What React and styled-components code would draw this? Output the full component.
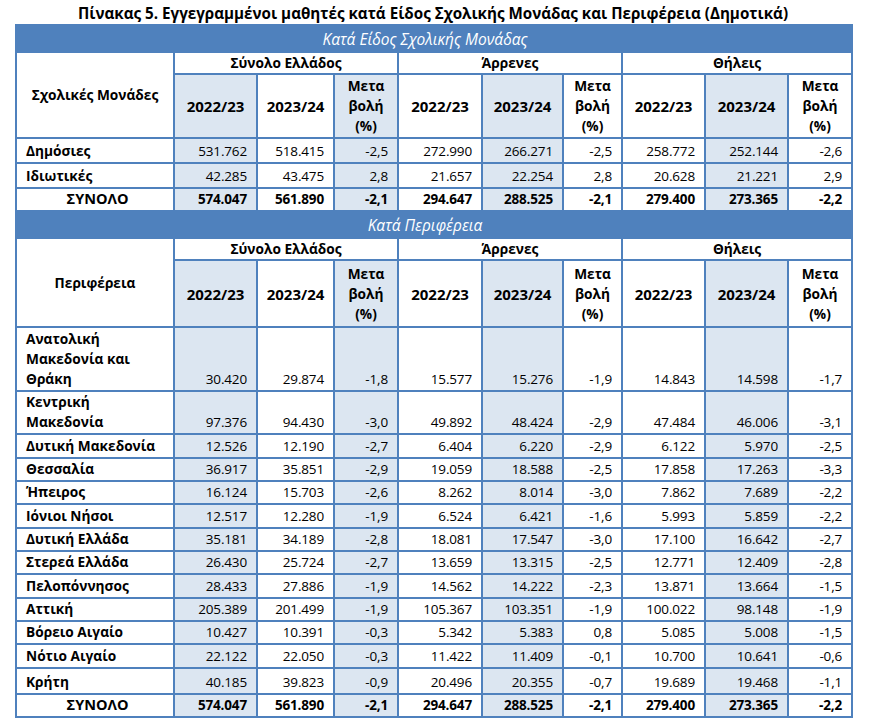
import React from "react";
import styled, { createGlobalStyle } from "styled-components";

const GlobalStyle = createGlobalStyle`
  html, body {
    margin: 0;
    padding: 0;
    background: #fff;
  }
  body {
    font-family: "Open Sans", "Noto Sans", "DejaVu Sans", sans-serif;
    color: #000;
  }
`;

const BLUE = "#4F81BD";
const SHADE = "#DCE6F1";

const widths = [158, 83, 77, 64, 84, 81, 59, 83, 83, 64];
const shaded = [false, true, false, true, false, true, false, false, true, false];

const types = [
  ["Δημόσιες", "531.762", "518.415", "-2,5", "272.990", "266.271", "-2,5", "258.772", "252.144", "-2,6"],
  ["Ιδιωτικές", "42.285", "43.475", "2,8", "21.657", "22.254", "2,8", "20.628", "21.221", "2,9"],
];
const typesTotal = ["ΣΥΝΟΛΟ", "574.047", "561.890", "-2,1", "294.647", "288.525", "-2,1", "279.400", "273.365", "-2,2"];

const regions = [
  [["Ανατολική", "Μακεδονία και", "Θράκη"], 64, "30.420", "29.874", "-1,8", "15.577", "15.276", "-1,9", "14.843", "14.598", "-1,7"],
  [["Κεντρική", "Μακεδονία"], 43, "97.376", "94.430", "-3,0", "49.892", "48.424", "-2,9", "47.484", "46.006", "-3,1"],
  [["Δυτική Μακεδονία"], 24, "12.526", "12.190", "-2,7", "6.404", "6.220", "-2,9", "6.122", "5.970", "-2,5"],
  [["Θεσσαλία"], 23, "36.917", "35.851", "-2,9", "19.059", "18.588", "-2,5", "17.858", "17.263", "-3,3"],
  [["Ήπειρος"], 23, "16.124", "15.703", "-2,6", "8.262", "8.014", "-3,0", "7.862", "7.689", "-2,2"],
  [["Ιόνιοι Νήσοι"], 24, "12.517", "12.280", "-1,9", "6.524", "6.421", "-1,6", "5.993", "5.859", "-2,2"],
  [["Δυτική Ελλάδα"], 23, "35.181", "34.189", "-2,8", "18.081", "17.547", "-3,0", "17.100", "16.642", "-2,7"],
  [["Στερεά Ελλάδα"], 23, "26.430", "25.724", "-2,7", "13.659", "13.315", "-2,5", "12.771", "12.409", "-2,8"],
  [["Πελοπόννησος"], 24, "28.433", "27.886", "-1,9", "14.562", "14.222", "-2,3", "13.871", "13.664", "-1,5"],
  [["Αττική"], 23, "205.389", "201.499", "-1,9", "105.367", "103.351", "-1,9", "100.022", "98.148", "-1,9"],
  [["Βόρειο Αιγαίο"], 23, "10.427", "10.391", "-0,3", "5.342", "5.383", "0,8", "5.085", "5.008", "-1,5"],
  [["Νότιο Αιγαίο"], 24, "22.122", "22.050", "-0,3", "11.422", "11.409", "-0,1", "10.700", "10.641", "-0,6"],
  [["Κρήτη"], 26, "40.185", "39.823", "-0,9", "20.496", "20.355", "-0,7", "19.689", "19.468", "-1,1"],
];
const regionsTotal = ["ΣΥΝΟΛΟ", "574.047", "561.890", "-2,1", "294.647", "288.525", "-2,1", "279.400", "273.365", "-2,2"];

const Page = styled.div`
  width: 869px;
  padding: 3px 0 0 15px;
  box-sizing: border-box;
`;

const Title = styled.h1`
  margin: 0;
  width: 836px;
  height: 21px;
  font-size: 15.2px;
  line-height: 20px;
  font-weight: 700;
  text-align: center;
  white-space: nowrap;
`;

const Table = styled.table`
  width: 836px;
  table-layout: fixed;
  border-collapse: collapse;
  border: 2px solid ${BLUE};
  font-size: 13.7px;
  line-height: 20px;
`;

const Row = styled.tr`
  height: ${(p) => p.$h}px;
`;

const BandCell = styled.th`
  background: ${BLUE};
  color: #fff;
  font-style: italic;
  font-weight: 400;
  font-size: 15.5px;
  text-align: center;
  padding: 0 18px 0 0;
  border: 2px solid ${BLUE};
`;

const HeadCell = styled.th`
  border: 2px solid ${BLUE};
  background: ${(p) => (p.$shade ? SHADE : "#fff")};
  font-weight: 700;
  font-size: ${(p) => (p.$year ? "15px" : "inherit")};
  text-align: center;
  vertical-align: middle;
  padding: 0 2px;
`;

const LabelCell = styled.td`
  border: 2px solid ${BLUE};
  font-weight: 700;
  font-size: ${(p) => (p.$center ? "14.5px" : "inherit")};
  text-align: ${(p) => (p.$center ? "center" : "left")};
  vertical-align: bottom;
  padding: 0 4px 1px 9px;
  white-space: nowrap;
`;

const NumCell = styled.td`
  border: 2px solid ${BLUE};
  background: ${(p) => (p.$shade ? SHADE : "#fff")};
  font-size: 13.5px;
  letter-spacing: -0.15px;
  font-weight: ${(p) => (p.$bold ? 700 : 400)};
  text-align: right;
  vertical-align: bottom;
  padding: 0 9px 1px 2px;
  white-space: nowrap;
`;

function HeaderBlock({ band, label, subHeight }) {
  const groups = ["Σύνολο Ελλάδος", "Άρρενες", "Θήλεις"];
  return (
    <>
      <Row $h={27}>
        <BandCell colSpan={10}>{band}</BandCell>
      </Row>
      <Row $h={22}>
        <HeadCell rowSpan={2}>{label}</HeadCell>
        {groups.map((g) => (
          <HeadCell key={g} colSpan={3}>
            {g}
          </HeadCell>
        ))}
      </Row>
      <Row $h={subHeight}>
        {groups.map((g, gi) => (
          <React.Fragment key={g}>
            <HeadCell $year $shade={shaded[gi * 3 + 1]}>2022/23</HeadCell>
            <HeadCell $year $shade={shaded[gi * 3 + 2]}>2023/24</HeadCell>
            <HeadCell $shade={shaded[gi * 3 + 3]}>
              Μετα
              <br />
              βολή
              <br />
              (%)
            </HeadCell>
          </React.Fragment>
        ))}
      </Row>
    </>
  );
}

function DataRow({ label, h, values, total }) {
  return (
    <Row $h={h}>
      <LabelCell $center={total}>
        {label.map((l, i) => (
          <React.Fragment key={i}>
            {i > 0 && <br />}
            {l}
          </React.Fragment>
        ))}
      </LabelCell>
      {values.map((v, i) => (
        <NumCell key={i} $shade={shaded[i + 1]} $bold={total}>
          {v}
        </NumCell>
      ))}
    </Row>
  );
}

export default function App() {
  return (
    <Page>
      <GlobalStyle />
      <Title>Πίνακας 5. Εγγεγραμμένοι μαθητές κατά Είδος Σχολικής Μονάδας και Περιφέρεια (Δημοτικά)</Title>
      <Table>
        <colgroup>
          {widths.map((w, i) => (
            <col key={i} style={{ width: w }} />
          ))}
        </colgroup>
        <tbody>
          <HeaderBlock band="Κατά Είδος Σχολικής Μονάδας" label="Σχολικές Μονάδες" subHeight={64} />
          {types.map(([name, ...vals]) => (
            <DataRow key={name} label={[name]} h={25} values={vals} />
          ))}
          <DataRow label={[typesTotal[0]]} h={23} values={typesTotal.slice(1)} total />
          <HeaderBlock band="Κατά Περιφέρεια" label="Περιφέρεια" subHeight={67} />
          {regions.map(([name, h, ...vals]) => (
            <DataRow key={name.join(" ")} label={name} h={h} values={vals} />
          ))}
          <DataRow label={[regionsTotal[0]]} h={23} values={regionsTotal.slice(1)} total />
        </tbody>
      </Table>
    </Page>
  );
}
